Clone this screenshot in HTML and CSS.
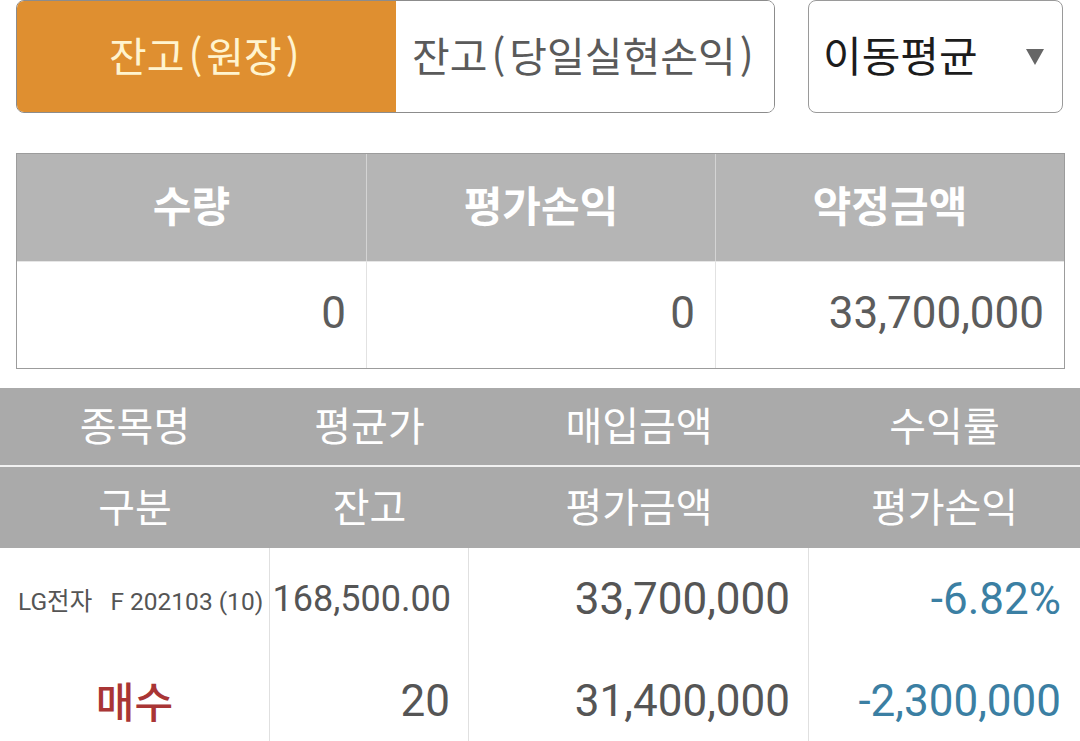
FILE: index.html
```
<!DOCTYPE html>
<html lang="ko">
<head>
<meta charset="utf-8">
<title>잔고</title>
<link rel="stylesheet" href="styles.css">
</head>
<body>
<div class="top">
  <div class="tabs">
    <div class="tab active">잔고<span class="p">(</span>원장<span class="p">)</span></div>
    <div class="tab">잔고<span class="p">(</span>당일실현손익<span class="p">)</span></div>
  </div>
  <div class="select">
    <span class="select-label">이동평균</span>
    <svg class="caret" width="18" height="16" viewBox="0 0 18 16"><polygon points="0,0 18,0 9,16" fill="#666"/></svg>
  </div>
</div>

<div class="summary">
  <div class="s-head">수량</div>
  <div class="s-head">평가손익</div>
  <div class="s-head">약정금액</div>
  <div class="s-cell">0</div>
  <div class="s-cell">0</div>
  <div class="s-cell">33,700,000</div>
</div>

<div class="data">
  <div class="d-head row1">
    <div>종목명</div><div>평균가</div><div>매입금액</div><div>수익률</div>
  </div>
  <div class="d-head row2">
    <div>구분</div><div>잔고</div><div>평가금액</div><div>평가손익</div>
  </div>
  <div class="d-row">
    <div class="d-cell name">LG전자   F 202103 (10)</div>
    <div class="d-cell num small">168,500.00</div>
    <div class="d-cell num">33,700,000</div>
    <div class="d-cell num blue">-6.82%</div>
  </div>
  <div class="d-row">
    <div class="d-cell side">매수</div>
    <div class="d-cell num">20</div>
    <div class="d-cell num">31,400,000</div>
    <div class="d-cell num blue">-2,300,000</div>
  </div>
</div>
</body>
</html>
```
FILE: styles.css
```
* { box-sizing: border-box; }
html, body { margin: 0; padding: 0; background: #fff; }
body {
  font-family: Roboto, "Noto Sans CJK KR", sans-serif;
  width: 1080px;
  height: 741px;
  overflow: hidden;
}

.top {
  display: flex;
  padding: 0 16px;
  height: 113px;
}
.tabs {
  display: flex;
  width: 759px;
  height: 113px;
  border: 1px solid #8c8c8c;
  border-radius: 8px;
  overflow: hidden;
}
.tab {
  flex: 1;
  display: flex;
  align-items: center;
  justify-content: center;
  font-family: "Noto Sans CJK KR", sans-serif;
  font-size: 41px;
  color: #5a5a5a;
  background: #fff;
  padding-bottom: 6px;
}
.tab.active {
  background: #df8f30;
  color: #fff4cf;
}
.p { margin: 0 4px; }

.select {
  margin-left: 33px;
  width: 255px;
  height: 113px;
  border: 1px solid #9a9a9a;
  border-radius: 8px;
  display: flex;
  align-items: center;
  justify-content: space-between;
  padding: 0 18px 6px 14px;
}
.select-label {
  font-family: "Noto Sans CJK KR", sans-serif;
  font-size: 42px;
  color: #1c1c1c;
}
.caret { display: block; margin-top: 6px; }

.summary {
  margin: 40px 15px 0 16px;
  border: 1px solid #9c9c9c;
  display: grid;
  grid-template-columns: 1fr 1fr 1fr;
  grid-template-rows: 107px 107px;
}
.s-head {
  background: #b5b5b5;
  color: #fff;
  font-family: "Noto Sans CJK KR", sans-serif;
  font-weight: 700;
  font-size: 42px;
  display: flex;
  align-items: center;
  justify-content: center;
  border-left: 1px solid #d4d4d4;
  padding-bottom: 8px;
}
.s-head:first-child { border-left: none; }
.s-cell {
  display: flex;
  align-items: center;
  justify-content: flex-end;
  padding-right: 20px;
  font-size: 44px;
  color: #5c5c5c;
  border-left: 1px solid #e2e2e2;
  border-top: 1px solid #e6e6e6;
  padding-bottom: 4px;
}
.s-cell:nth-child(4) { border-left: none; }

.data { margin-top: 19px; }
.d-head {
  display: grid;
  grid-template-columns: 270px 199px 340px 271px;
  background: #aaaaaa;
  color: #fff;
  font-family: "Noto Sans CJK KR", sans-serif;
  font-size: 40px;
}
.d-head > div {
  display: flex;
  align-items: center;
  justify-content: center;
  padding-bottom: 6px;
}
.d-head.row1 { height: 79px; border-bottom: 2px solid #f2f2f2; }
.d-head.row2 { height: 81px; }

.d-row {
  display: grid;
  grid-template-columns: 270px 199px 340px 271px;
  height: 102px;
}
.d-cell {
  display: flex;
  align-items: center;
  border-right: 1px solid #e0e0e0;
}
.d-cell:last-child { border-right: none; }
.num {
  justify-content: flex-end;
  padding-right: 18px;
  font-size: 44px;
  color: #555;
}
.num.small { font-size: 36px; padding-right: 17px; }
.num.blue { color: #3b7fa3; padding-right: 19px; }
.name {
  padding-left: 18px;
  white-space: pre;
  font-size: 24.5px;
  color: #555;
}
.side {
  justify-content: center;
  font-family: "Noto Sans CJK KR", sans-serif;
  font-weight: 500;
  font-size: 42px;
  color: #a93535;
  padding-bottom: 4px;
}
```
